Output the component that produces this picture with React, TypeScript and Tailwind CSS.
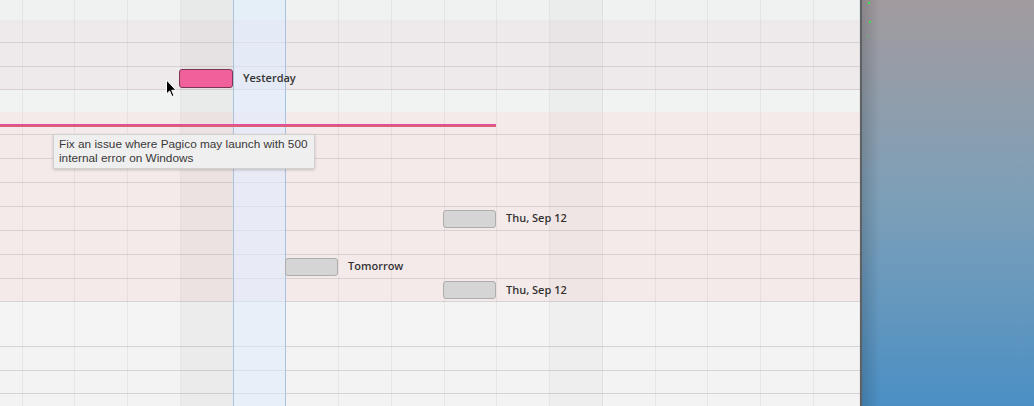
import { ReactNode } from "react"

type RowProps = { h: string; bg: string; line?: boolean; children?: ReactNode }

function Row({ h, bg, line = true, children }: RowProps) {
  return (
    <div className={`flex items-center shrink-0 ${h} ${bg} ${line ? "border-b border-[#d8d2d4]" : ""}`}>
      {children}
    </div>
  )
}

function GreyBar({ left, label }: { left: string; label: string }) {
  return (
    <div className={`relative z-10 flex items-center ${left}`}>
      <div className="h-[18px] w-[53px] rounded-[3px] border border-[#adadad] bg-[#d6d5d6]" />
      <span className="ml-[10px] text-[11px] font-semibold text-[#333]">{label}</span>
    </div>
  )
}

const columns = Array.from({ length: 17 })

export default function App() {
  return (
    <div className="flex h-[406px] w-[1034px] overflow-hidden font-['Open_Sans','Liberation_Sans',sans-serif]">
      {/* gantt panel */}
      <div className="relative h-full w-[860px] shrink-0 overflow-hidden bg-[#f3f3f3]">
        <div className="flex flex-col">
          <Row h="h-[20px]" bg="bg-[#eff2f1]" line={false} />
          <Row h="h-[23px]" bg="bg-[#eeeaec]" />
          <Row h="h-[24px]" bg="bg-[#eeeaec]" />
          <Row h="h-[23px]" bg="bg-[#eeeaec]">
            <div className="relative z-10 ml-[179px] flex items-center">
              <div className="h-[19px] w-[54px] rounded-[3px] border border-[#7c3652] bg-[#f0619b]" />
              <span className="ml-[10px] text-[11px] font-semibold text-[#333]">Yesterday</span>
            </div>
          </Row>
          <Row h="h-[22px]" bg="bg-[#f0f3f2]" line={false} />
          <Row h="h-[23px]" bg="bg-[#f5eaea]">
            <div className="relative z-10 mt-[5px] flex h-[3px] w-[496px] flex-col">
              <div className="h-px bg-[#e648a4]" />
              <div className="h-[2px] bg-[#da5f7b]" />
            </div>
          </Row>
          <Row h="h-[24px]" bg="bg-[#f5eaea]" />
          <Row h="h-[24px]" bg="bg-[#f5eaea]" />
          <Row h="h-[24px]" bg="bg-[#f5eaea]" />
          <Row h="h-[24px]" bg="bg-[#f5eaea]">
            <GreyBar left="ml-[443px]" label="Thu, Sep 12" />
          </Row>
          <Row h="h-[24px]" bg="bg-[#f5eaea]" />
          <Row h="h-[24px]" bg="bg-[#f5eaea]">
            <GreyBar left="ml-[285px]" label="Tomorrow" />
          </Row>
          <Row h="h-[23px]" bg="bg-[#f5eaea]">
            <GreyBar left="ml-[443px]" label="Thu, Sep 12" />
          </Row>
          <Row h="h-[45px]" bg="bg-[#f3f4f3]" />
          <Row h="h-[24px]" bg="bg-[#f3f3f3]" />
          <Row h="h-[23px]" bg="bg-[#f3f3f3]" />
          <Row h="h-[40px]" bg="bg-[#f3f3f3]" line={false} />
        </div>

        {/* day columns */}
        <div className="pointer-events-none absolute inset-0 grid grid-cols-[22.5px_repeat(15,52.75px)_1fr]">
          {columns.map((_, i) => {
            if (i === 4) return <div key={i} className="border-r border-[#a9c3dc] bg-black/[0.03]" />
            if (i === 5) return <div key={i} className="border-r border-[#a9c3dc] bg-[#dcecff]/50" />
            if (i === 11) return <div key={i} className="border-r border-black/[0.05] bg-black/[0.02]" />
            return <div key={i} className="border-r border-black/[0.05]" />
          })}
        </div>

        {/* tooltip */}
        <div className="absolute left-[53px] top-[134px] z-20 w-[262px] whitespace-nowrap rounded-[2px] border border-[#d3d0d0] bg-[#f0efef] px-[5px] pt-[2px] pb-[3px] text-[11.8px] leading-[14px] text-[#383838] shadow-[0_1px_3px_rgba(0,0,0,0.2)] font-['Liberation_Sans',sans-serif]">
          Fix an issue where Pagico may launch with 500
          <br />
          internal error on Windows
        </div>

        {/* mouse pointer */}
        <svg className="absolute left-[165px] top-[79px] z-20" width="12" height="19" viewBox="0 0 12 19">
          <path d="M1.5 1 L1.5 15 L4.6 12 L7 17.5 L9 16.6 L6.7 11.3 L11 11.3 Z" fill="#000" stroke="#fff" strokeWidth="1" strokeLinejoin="round" />
        </svg>
      </div>

      {/* desktop */}
      <div className="w-[2px] shrink-0 bg-[#5f6264]" />
      <div className="relative flex-1 bg-gradient-to-b from-[#a29b9f] via-[#7c9fb8] to-[#4a8fc4]">
        <div className="absolute inset-y-0 left-0 w-[18px] bg-gradient-to-r from-black/15 to-transparent" />
        <div className="absolute left-[6px] top-[2px] h-[2px] w-[2px] bg-[#3ee04a]" />
        <div className="absolute left-[7px] top-[21px] h-[2px] w-[2px] bg-[#3ee04a]" />
        <div className="absolute left-[5px] top-[36px] h-px w-px bg-[#3ee04a]" />
      </div>
    </div>
  )
}
